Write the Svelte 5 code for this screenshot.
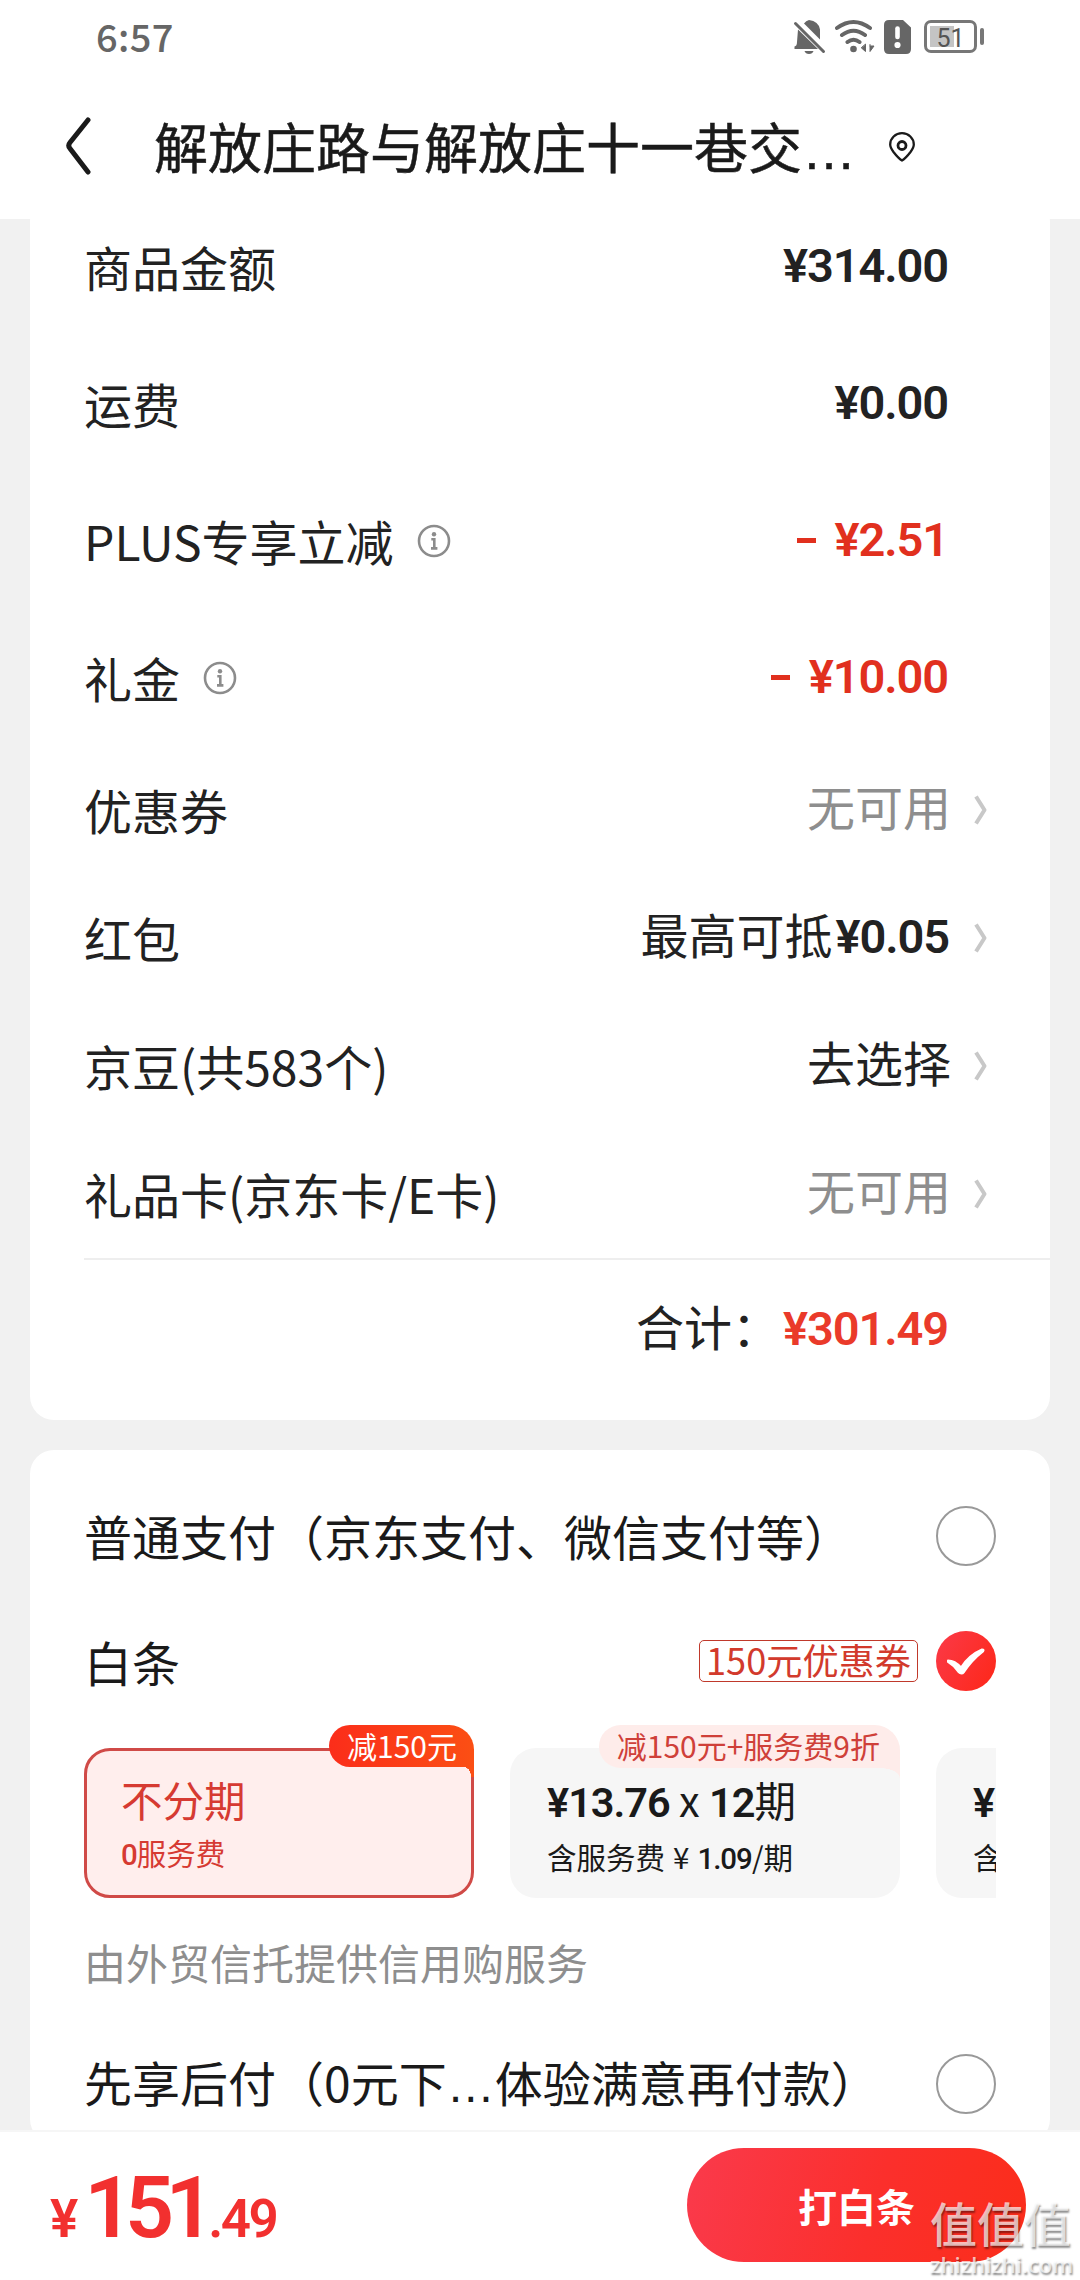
<script lang="ts">
	type Row = {
		label: string;
		money?: string;
		text?: string;
		info?: boolean;
		link?: boolean;
		tone?: 'red' | 'muted';
	};

	const amounts: Row[] = [
		{ label: '商品金额', money: '¥314.00' },
		{ label: '运费', money: '¥0.00' },
		{ label: 'PLUS专享立减', money: '¥2.51', info: true, tone: 'red' },
		{ label: '礼金', money: '¥10.00', info: true, tone: 'red' }
	];

	const benefits: Row[] = [
		{ label: '优惠券', text: '无可用', link: true, tone: 'muted' },
		{ label: '红包', text: '最高可抵', money: '¥0.05', link: true },
		{ label: '京豆(共583个)', text: '去选择', link: true },
		{ label: '礼品卡(京东卡/E卡)', text: '无可用', link: true, tone: 'muted' }
	];

	let selected = $state('baitiao');
</script>

{#snippet row(item: Row)}
	<div class="row" class:compact={item.link}>
		<span class="label">{item.label}</span>
		{#if item.info}
			<svg class="info" viewBox="0 0 34 34">
				<circle cx="17" cy="17" r="15" fill="none" stroke="#8c8c8c" stroke-width="2.6" />
				<circle cx="17" cy="10.3" r="2.2" fill="#8c8c8c" />
				<path d="M14.3 15.2h3v8.6M14 24.4h6.4" fill="none" stroke="#8c8c8c" stroke-width="2.6" />
			</svg>
		{/if}
		<span class="value {item.tone ?? ''}">
			{#if item.tone === 'red'}<i class="minus"></i>{/if}
			{#if item.text}<span>{item.text}</span>{/if}
			{#if item.money}<span class="money">{item.money}</span>{/if}
		</span>
		{#if item.link}
			<svg class="chevron" viewBox="0 0 14 32">
				<path d="M2 2.5 10.5 16 2 29.5" fill="none" stroke="#c8c8c8" stroke-width="4" stroke-linejoin="round" />
			</svg>
		{/if}
	</div>
{/snippet}

{#snippet radio(id: string, name: string)}
	<button class="radio" class:on={selected === id} aria-label={name} onclick={() => (selected = id)}>
		{#if selected === id}
			<svg viewBox="0 0 60 60">
				<path d="M12 29.500q7 0 13 7Q33 24 46 18.500q2.500 0 1 2Q36 29 28 41q-2.500 3-5.500 0Q18 34.500 12 31Z" fill="#fff" stroke="#fff" stroke-width="2" stroke-linejoin="round" />
			</svg>
		{/if}
	</button>
{/snippet}

<div class="screen">
	<header>
		<div class="status">
			<span class="time">6:57</span>
			<div class="icons">
				<svg width="34" height="36" viewBox="0 0 34 36" fill="#666">
					<path d="M11 4.500Q13 1.500 16 1q9.500 1 11 9.500V20.500L11 4.500ZM5 10.500 25 30H1.500v-2.500Q4 27 4 23Z" />
					<path d="M11.500 32h9q-1 3-4.500 3t-4.500-3Z" />
					<path d="M2.500 4.500 30.500 32.500" stroke="#666" stroke-width="3" stroke-linecap="round" />
				</svg>
				<svg class="wifi" width="42" height="36" viewBox="0 0 42 36" fill="none" stroke="#666" stroke-width="4" stroke-linecap="round">
					<path d="M3 9q16.500-12 33 0M8 16q11.500-8.500 23 0M13.500 23q6-4.500 12 0" />
					<circle cx="19.500" cy="30" r="3.300" fill="#666" stroke="none" />
					<path d="M31.500 25.500v7l-4-3.500ZM36 25.500v7l4-5.500h-4" fill="#666" stroke-width="1" />
				</svg>
				<svg class="sim" width="27" height="34" viewBox="0 0 27 34">
					<path d="M5 0h14l8 7.500V29q0 5-5 5H5q-5 0-5-5V5q0-5 5-5Z" fill="#666" />
					<path d="M13.500 8.500v8.500" stroke="#fff" stroke-width="4.600" stroke-linecap="round" />
					<circle cx="13.500" cy="25" r="3.100" fill="#fff" />
				</svg>
				<div class="battery"><span>51</span></div>
			</div>
		</div>
		<div class="address">
			<svg class="back" viewBox="0 0 26 58">
				<path d="M23 3 5 25.500Q2.500 28.500 5 31.500L23 55" fill="none" stroke="#1a1a1a" stroke-width="5" stroke-linecap="round" />
			</svg>
			<h1>解放庄路与解放庄十一巷交<span class="dots">…</span></h1>
			<svg class="pin" viewBox="0 0 26 30" fill="none" stroke="#1a1a1a" stroke-width="2.300">
				<path d="M13 28.500Q9.500 26.500 4.500 20 1.200 15.500 1.200 12.500a11.800 11.300 0 0 1 23.600 0q0 3-3.300 7.500-5 6.500-8.500 8.500Z" />
				<circle cx="13" cy="13.500" r="4" stroke-width="2.800" />
			</svg>
		</div>
	</header>

	<main>
		<section class="card summary">
			{#each amounts as item}
				{@render row(item)}
			{/each}
			{#each benefits as item}
				{@render row(item)}
			{/each}
			<div class="total">
				<span>合计：</span>
				<span class="money">¥301.49</span>
			</div>
		</section>

		<section class="card payment">
			<div class="method">
				<span>普通支付（京东支付、微信支付等）</span>
				{@render radio('normal', '普通支付')}
			</div>
			<div class="method">
				<span>白条</span>
				<em class="coupon">150元优惠券</em>
				{@render radio('baitiao', '白条')}
			</div>
			<div class="plans">
				<div class="plan active">
					<span class="tag">减150元</span>
					<strong>不分期</strong>
					<small><b>0</b>服务费</small>
				</div>
				<div class="plan">
					<span class="tag">减150元+服务费9折</span>
					<strong><b>¥13.76</b> x <b>12</b>期</strong>
					<small>含服务费<span class="yuan">¥</span><b>1.09</b>/期</small>
				</div>
				<div class="plan">
					<strong><b>¥</b></strong>
					<small>含</small>
				</div>
			</div>
			<p class="note">由外贸信托提供信用购服务</p>
			<div class="method last">
				<span>先享后付（0元下<span class="dots">…</span>体验满意再付款）</span>
				{@render radio('later', '先享后付')}
			</div>
		</section>
	</main>

	<footer>
		<div class="price"><span class="sign">¥</span><span class="int">151</span><span class="dec">.49</span></div>
		<button class="pay">打白条</button>
		<div class="watermark">
			<span class="mark">值值值</span>
			<span class="site">zhizhizhi.com</span>
		</div>
	</footer>
</div>

<style>
	:global(body) {
		background: #fff;
	}

	.screen {
		position: relative;
		display: flex;
		flex-direction: column;
		width: 1080px;
		height: 2280px;
		overflow: hidden;
		background: #f1f1f1;
		color: #222;
		font-family: 'Noto Sans CJK SC', sans-serif;
		font-size: 48px;
		line-height: 1.2;
		white-space: nowrap;
	}

	button {
		padding: 0;
		border: 0;
		background: none;
		font: inherit;
	}

	svg {
		display: block;
		flex: none;
	}

	header {
		flex: none;
		height: 219px;
		background: #fff;
	}

	.status {
		display: flex;
		align-items: center;
		height: 73px;
		padding: 0 103px 0 96px;
		color: #666;
	}

	.time {
		padding-bottom: 1px;
		font-size: 38px;
		font-weight: 500;
		letter-spacing: 0.4px;
	}

	.icons {
		display: flex;
		align-items: center;
		margin-left: auto;
	}

	.wifi {
		margin-left: 7px;
	}

	.sim {
		margin-left: 8px;
	}

	.battery {
		position: relative;
		box-sizing: border-box;
		width: 53px;
		height: 33px;
		margin-left: 13px;
		border: 3px solid #777;
		border-radius: 7px;
		background: linear-gradient(#c4c4c4, #c4c4c4) 3px 3px / 24px 21px no-repeat;
		color: #555;
		font: 25px/31px Roboto, sans-serif;
		text-align: center;
	}

	.battery::after {
		content: '';
		position: absolute;
		top: 5px;
		right: -10px;
		width: 4px;
		height: 17px;
		border-radius: 2px;
		background: #777;
	}

	.address {
		display: flex;
		align-items: center;
		height: 146px;
		padding-left: 65px;
	}

	.back {
		width: 26px;
		height: 58px;
	}

	h1 {
		margin: 0 0 0 63px;
		padding-top: 5px;
		color: #1a1a1a;
		font-size: 54px;
		font-weight: 400;
		-webkit-text-stroke: 0.5px;
	}

	.dots {
		font-family: 'Liberation Sans', sans-serif;
	}

	.pin {
		width: 26px;
		height: 30px;
		margin: 2px 0 0 33px;
	}

	main {
		flex: 1;
		min-height: 0;
		overflow: hidden;
		padding: 0 30px;
	}

	.card {
		background: #fff;
		border-radius: 24px;
	}

	.summary {
		margin: -21px 0 30px;
		padding: 0 0 28px 54px;
	}

	.row {
		display: flex;
		align-items: center;
		height: 137px;
		padding-right: 102px;
	}

	.row.compact {
		height: 128px;
		padding-right: 62px;
	}

	.info {
		width: 34px;
		height: 34px;
		margin-left: 23px;
	}

	.value {
		display: flex;
		align-items: center;
		margin-left: auto;
		padding-bottom: 6px;
	}

	.money {
		padding-top: 6px;
		font-family: Roboto, sans-serif;
		font-size: 47px;
		font-weight: 600;
		letter-spacing: -1.1px;
	}

	.red {
		color: #e1301e;
	}

	.muted {
		color: #8e8e8e;
	}

	.minus {
		width: 19px;
		height: 5px;
		margin: 7px 19px 0 0;
		background: currentColor;
	}

	.chevron {
		width: 14px;
		height: 32px;
		margin-left: 23px;
	}

	.compact .value {
		padding-bottom: 8px;
	}

	.compact .money {
		margin: 0 2px 0 3px;
	}

	.total {
		display: flex;
		justify-content: flex-end;
		align-items: center;
		height: 132px;
		padding-right: 102px;
		border-top: 2px solid #eee;
	}

	.total .money {
		margin-left: 3px;
		color: #ea3a2a;
	}

	.payment {
		padding: 23px 54px 0;
	}

	.method {
		display: flex;
		align-items: center;
		height: 126px;
		color: #1a1a1a;
	}

	.method > span {
		padding-bottom: 1px;
	}

	.method.last {
		height: 118px;
	}

	.radio {
		box-sizing: border-box;
		width: 60px;
		height: 60px;
		margin-left: auto;
		border: 2px solid #999;
		border-radius: 50%;
	}

	.radio.on {
		margin: -2px 0 0 18px;
		border: 0;
		background: linear-gradient(120deg, #fb3a48, #fd2718);
	}

	.coupon {
		box-sizing: border-box;
		height: 42px;
		margin: -2px 0 0 auto;
		padding: 0 6px;
		border: 1px solid #c0392b;
		border-radius: 5px;
		color: #d23a2c;
		font-size: 36.2px;
		font-style: normal;
		line-height: 37px;
	}

	.plans {
		display: flex;
		gap: 36px;
		overflow: hidden;
		margin-top: -2px;
		padding-top: 25px;
	}

	.plan {
		position: relative;
		display: flex;
		flex: none;
		flex-direction: column;
		box-sizing: border-box;
		width: 390px;
		height: 150px;
		padding: 25px 0 0 37px;
		border-radius: 26px;
		background: #f6f6f6;
		color: #1a1a1a;
	}

	.plan.active {
		padding: 22px 0 0 34px;
		border: 3px solid #d04a47;
		background: #ffeeed;
		color: #d63a32;
	}

	.plan strong {
		font-size: 41.5px;
		font-weight: 400;
		line-height: 52px;
	}

	.plan b {
		font-family: Roboto, sans-serif;
		font-weight: 600;
		letter-spacing: -1px;
	}

	.plan small {
		margin-top: 4px;
		font-size: 29.5px;
		line-height: 46px;
	}

	.plan small b {
		font-weight: 500;
	}

	.yuan {
		margin: 0 8px;
	}

	.tag {
		position: absolute;
		top: -23px;
		right: 0;
		height: 43px;
		padding: 0 20px 0 18px;
		border-radius: 22px 26px 0 22px;
		background: #feecea;
		color: #cf4039;
		font-size: 30px;
		line-height: 41px;
	}

	.tag::after {
		content: '';
		position: absolute;
		top: 43px;
		right: 0;
		width: 20px;
		height: 10px;
		background: radial-gradient(ellipse 20px 10px at 0 100%, transparent 97%, #feecea);
	}

	.active .tag {
		top: -26px;
		right: -3px;
		height: 42px;
		padding: 0 17px 0 18px;
		background: linear-gradient(90deg, #fb2d1a, #fb4f14);
		color: #fff;
	}

	.active .tag::after {
		top: 42px;
		width: 8px;
		background: radial-gradient(ellipse 5px 9px at 0 100%, transparent 97%, #fb4f14);
	}

	.note {
		margin: 0;
		color: #8e8e8e;
		font-size: 42px;
		line-height: 127px;
	}

	footer {
		display: flex;
		flex: none;
		align-items: center;
		justify-content: space-between;
		box-sizing: border-box;
		height: 150px;
		padding: 0 54px 0 50px;
		border-top: 2px solid #f6f6f6;
		background: #fff;
	}

	.price {
		padding-top: 4px;
		color: #f2302f;
		font-family: Roboto, sans-serif;
		font-size: 53px;
		font-weight: 600;
	}

	.int {
		margin-left: 6px;
		font-size: 86px;
		letter-spacing: -8.5px;
	}

	.dec {
		margin-left: 2px;
		letter-spacing: -2.5px;
	}

	.pay {
		width: 339px;
		height: 114px;
		margin-top: -2px;
		border-radius: 57px;
		background: linear-gradient(105deg, #fa3a4c, #fb2f2c 55%, #fb2d1a);
		color: #fff;
		font-size: 39px;
		font-weight: 700;
	}

	.watermark {
		position: absolute;
		right: 2px;
		bottom: 3px;
		display: flex;
		flex-direction: column;
		width: 148px;
		color: rgb(255 255 255 / 70%);
		text-shadow: 1px 2px 2px rgb(0 0 0 / 45%);
	}

	.mark {
		font-size: 47px;
		font-weight: 500;
		line-height: 58px;
	}

	.site {
		font: 600 22px/26px 'Open Sans', sans-serif;
	}
</style>
